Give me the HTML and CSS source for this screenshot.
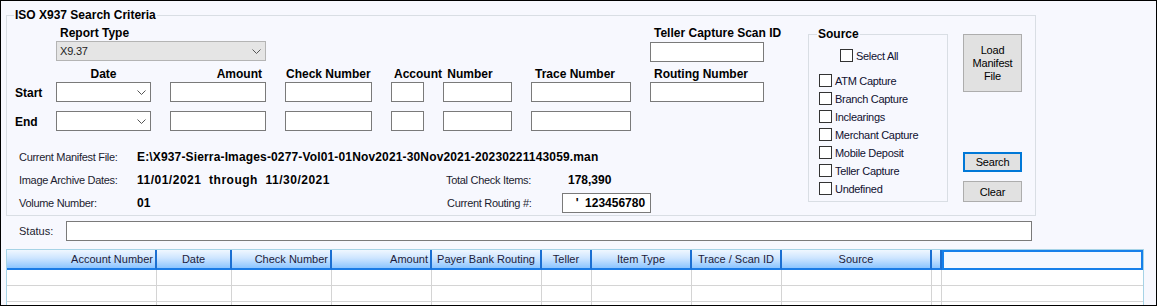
FILE: index.html
```html
<!DOCTYPE html>
<html lang="en">
<head>
    <meta charset="UTF-8">
    <meta name="viewport" content="width=device-width, initial-scale=1.0">
    <title>ISO X937 Search</title>
    <link rel="stylesheet" href="styles.css">
</head>
<body>
<div class="window">
    <fieldset class="group criteria-group">
        <legend>ISO X937 Search Criteria</legend>
        <div class="group-body">
            <div class="criteria">
                <div class="filter-grid">
                    <label class="h rt-label">Report Type</label>
                    <div class="combo disabled rt-combo"><span>X9.37</span>
                        <svg width="9" height="5" viewBox="0 0 9 5"><polyline points="0.5,0.5 4.5,4.5 8.5,0.5" fill="none" stroke="#555" stroke-width="1"/></svg>
                    </div>
                    <label class="h teller-label">Teller Capture Scan ID</label>
                    <input class="field teller-input" type="text">

                    <span class="h col col-date">Date</span>
                    <span class="h col col-amount">Amount</span>
                    <span class="h col col-check">Check Number</span>
                    <span class="h col col-account">Account Number</span>
                    <span class="h col col-trace">Trace Number</span>
                    <span class="h col col-routing">Routing Number</span>

                    <span class="h row-label row-start">Start</span>
                    <div class="combo row-start c-date">
                        <svg width="9" height="5" viewBox="0 0 9 5"><polyline points="0.5,0.5 4.5,4.5 8.5,0.5" fill="none" stroke="#555" stroke-width="1"/></svg>
                    </div>
                    <input class="field row-start c-amount" type="text">
                    <input class="field row-start c-check" type="text">
                    <input class="field row-start c-acct1" type="text">
                    <input class="field row-start c-acct2" type="text">
                    <input class="field row-start c-trace" type="text">
                    <input class="field row-start c-routing" type="text">

                    <span class="h row-label row-end">End</span>
                    <div class="combo row-end c-date">
                        <svg width="9" height="5" viewBox="0 0 9 5"><polyline points="0.5,0.5 4.5,4.5 8.5,0.5" fill="none" stroke="#555" stroke-width="1"/></svg>
                    </div>
                    <input class="field row-end c-amount" type="text">
                    <input class="field row-end c-check" type="text">
                    <input class="field row-end c-acct1" type="text">
                    <input class="field row-end c-acct2" type="text">
                    <input class="field row-end c-trace" type="text">
                </div>

                <div class="info">
                    <span class="info-label">Current Manifest File:</span>
                    <span class="info-value manifest">E:\X937-Sierra-Images-0277-Vol01-01Nov2021-30Nov2021-20230221143059.man</span>

                    <span class="info-label">Image Archive Dates:</span>
                    <span class="info-value dates">11/01/2021  through  11/30/2021</span>
                    <span class="info-label info-label2">Total Check Items:</span>
                    <span class="info-value total">178,390</span>

                    <span class="info-label">Volume Number:</span>
                    <span class="info-value">01</span>
                    <span class="info-label info-label2 routing-label">Current Routing #:</span>
                    <span class="info-value routing-box">' 123456780</span>
                </div>
            </div>

            <fieldset class="group source">
                <legend>Source</legend>
                <label class="check select-all"><input type="checkbox"> Select All</label>
                <div class="source-list">
                    <label class="check"><input type="checkbox"> ATM Capture</label>
                    <label class="check"><input type="checkbox"> Branch Capture</label>
                    <label class="check"><input type="checkbox"> Inclearings</label>
                    <label class="check"><input type="checkbox"> Merchant Capture</label>
                    <label class="check"><input type="checkbox"> Mobile Deposit</label>
                    <label class="check"><input type="checkbox"> Teller Capture</label>
                    <label class="check"><input type="checkbox"> Undefined</label>
                </div>
            </fieldset>

            <div class="actions">
                <button class="btn load">Load<br>Manifest<br>File</button>
                <button class="btn search">Search</button>
                <button class="btn clear">Clear</button>
            </div>
        </div>
    </fieldset>

    <div class="status">
        <label>Status:</label>
        <input class="field status-input" type="text">
    </div>

    <table class="grid">
        <thead>
            <tr>
                <th class="right w-acct">Account Number</th>
                <th class="w-date">Date</th>
                <th class="right w-check">Check Number</th>
                <th class="right w-amount">Amount</th>
                <th class="w-payer">Payer Bank Routing</th>
                <th class="w-teller">Teller</th>
                <th class="w-type">Item Type</th>
                <th class="w-trace">Trace / Scan ID</th>
                <th class="w-source">Source</th>
                <th class="w-tiny"></th>
                <th class="selected w-rest"></th>
            </tr>
        </thead>
        <tbody>
            <tr><td></td><td></td><td></td><td></td><td></td><td></td><td></td><td></td><td></td><td></td><td></td></tr>
            <tr><td></td><td></td><td></td><td></td><td></td><td></td><td></td><td></td><td></td><td></td><td></td></tr>
            <tr><td></td><td></td><td></td><td></td><td></td><td></td><td></td><td></td><td></td><td></td><td></td></tr>
        </tbody>
    </table>
</div>
</body>
</html>
```

FILE: styles.css
```css
*{box-sizing:border-box}
body{
    margin:0;
    font-family:"Liberation Sans", Arial, sans-serif;
    font-size:11px;
    color:#000;
}
.window{
    width:1157px;
    height:306px;
    border:1px solid #000;
    background-color:#f7f8fe;
    overflow:hidden;
}

/* group boxes */
.group{
    margin:0;
    padding:0;
    border:1px solid #d9dee4;
    min-width:0;
}
.group > legend{
    font-weight:bold;
    font-size:12px;
    line-height:14px;
    padding:0 1px;
    margin-left:7px;
}
.criteria-group{
    margin:7px 0 0 5px;
    width:1030px;
    height:208px;
}
.group-body{
    display:flex;
    align-items:flex-start;
    padding-left:8px;
}
.criteria{
    flex:none;
    width:793px;
}

/* filter grid */
.filter-grid{
    display:grid;
    grid-template-columns:22px 95px 96px 87px 33px 69px 100px 114px;
    grid-template-rows:16px 21px 20px 20px 9px 20px;
    column-gap:19px;
    margin-top:3px;
}
.h{
    font-weight:bold;
    font-size:12px;
    white-space:nowrap;
    align-self:center;
}
.h.col{align-self:end;padding-bottom:1px}
.rt-label{grid-column:2 / 4;grid-row:1;padding-left:4px}
.rt-combo{grid-column:2 / 4;grid-row:2;height:21px}
.teller-label{grid-column:8;grid-row:1;padding-left:4px}
.teller-input{grid-column:8;grid-row:2;width:76px;align-self:end}

.col-date{grid-column:2;grid-row:3;text-align:center}
.col-amount{grid-column:3;grid-row:3;text-align:right;padding-right:4px}
.col-check{grid-column:4;grid-row:3;padding-left:1px}
.col-account{grid-column:5 / 7;grid-row:3;padding-left:3px;word-spacing:2px}
.col-trace{grid-column:7;grid-row:3;padding-left:4px}
.col-routing{grid-column:8;grid-row:3;padding-left:4px}

.row-start{grid-row:4}
.row-end{grid-row:6}
.row-label{grid-column:1;padding-top:1px}
.c-date{grid-column:2}
.c-amount{grid-column:3}
.c-check{grid-column:4}
.c-acct1{grid-column:5}
.c-acct2{grid-column:6}
.c-trace{grid-column:7}
.c-routing{grid-column:8}

.field{
    height:20px;
    width:100%;
    margin:0;
    padding:0 3px;
    border:1px solid #7a7a7a;
    background-color:#fff;
    font:inherit;
}
.combo{
    height:20px;
    display:flex;
    align-items:center;
    justify-content:flex-end;
    padding:0 4px 0 3px;
    border:1px solid #7a7a7a;
    background-color:#fff;
}
.combo.disabled{
    justify-content:space-between;
    background-color:#e5e5e5;
    border-color:#b4b4b4;
    color:#222;
    letter-spacing:-0.2px;
}

/* manifest info */
.info{
    display:grid;
    grid-template-columns:122px 309px 116px 89px;
    grid-template-rows:repeat(3, 20px);
    row-gap:3px;
    align-items:center;
    margin-top:16px;
}
.info-label{
    padding-left:4px;
    color:#1c1c30;
    letter-spacing:-0.3px;
    white-space:nowrap;
}
.info-label2{padding-left:0}
.routing-label{padding-left:1px}
.info-value{
    font-weight:bold;
    font-size:12px;
    white-space:pre;
}
.manifest{grid-column:2 / 5;letter-spacing:0.15px}
.dates{letter-spacing:0.5px}
.total{padding-left:6px}
.routing-box{
    height:20px;
    border:1px solid #7a7a7a;
    background-color:#fff;
    display:flex;
    align-items:center;
    justify-content:center;
    padding-left:8px;
    word-spacing:3px;
}

/* source box */
.source{
    flex:none;
    width:140px;
    height:175px;
    margin-top:5px;
}
.source > legend{margin-left:8px}
.check{
    display:flex;
    align-items:center;
    gap:3px;
    height:13px;
    white-space:nowrap;
    color:#101030;
    letter-spacing:-0.3px;
}
.check input{
    appearance:none;
    -webkit-appearance:none;
    width:13px;
    height:13px;
    margin:0;
    border:1px solid #333;
    background-color:#fff;
}
.select-all{margin:8px 0 0 31px}
.source-list{
    display:flex;
    flex-direction:column;
    gap:5px;
    margin-top:12px;
    padding-left:10px;
}

/* buttons */
.actions{
    flex:none;
    display:flex;
    flex-direction:column;
    width:59px;
    margin-left:15px;
}
.btn{
    width:59px;
    margin:0;
    padding:0;
    border:1px solid #adadad;
    background-color:#e1e1e1;
    font:inherit;
    color:#000;
    letter-spacing:-0.2px;
}
.load{height:58px;margin-top:12px;line-height:13px}
.search{height:20px;margin-top:60px;border:2px solid #0078d7}
.clear{height:21px;margin-top:9px}

/* status */
.status{
    display:flex;
    align-items:center;
    margin-top:5px;
    padding-left:18px;
}
.status label{width:47px;color:#1c1c30}
.status-input{width:966px}

/* results grid */
.grid{
    margin:8px 0 0 5px;
    width:1138px;
    table-layout:fixed;
    border-collapse:separate;
    border-spacing:0;
    border:1px solid #a6d3e6;
    border-bottom:none;
    background-color:#fff;
}
.grid th{
    height:20px;
    padding:0 2px;
    font-weight:normal;
    color:#1c1c3c;
    text-align:center;
    white-space:nowrap;
    background:linear-gradient(to bottom, #f0f7ff 0%, #cde5ff 45%, #8cc5ff 100%);
    border-right:2px solid #1b6fd2;
    border-bottom:2px solid #1a7be6;
}
.grid th.right{text-align:right}
.grid th.selected{
    background:#f4f8ff;
    border:2px solid #1680ea;
}
.grid td{
    height:16px;
    padding:0;
    border-right:1px solid #d4d4d4;
    border-bottom:1px solid #d4d4d4;
}
.grid td:last-child{border-right:none}
.w-acct{width:150px}
.w-date{width:75px}
.w-check{width:100px}
.w-amount{width:100px}
.w-payer{width:110px}
.w-teller{width:50px}
.w-type{width:100px}
.w-trace{width:90px}
.w-source{width:150px}
.w-tiny{width:10px}
.w-rest{width:201px}
```
